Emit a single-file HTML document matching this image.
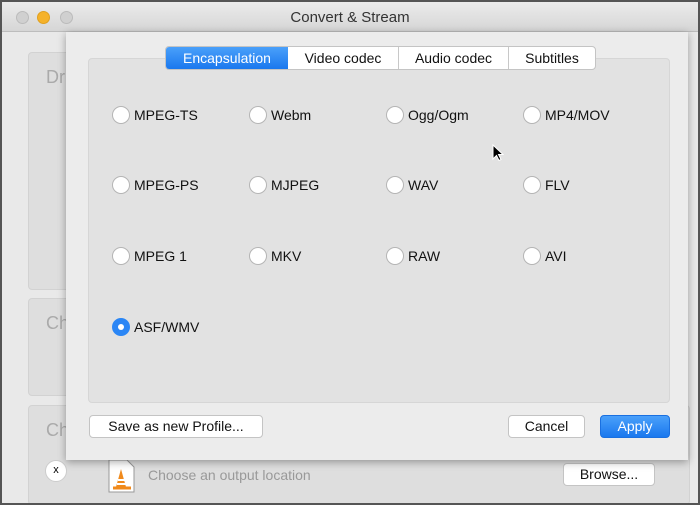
<!DOCTYPE html>
<html><head><style>
*{margin:0;padding:0;box-sizing:border-box}
body{width:700px;height:505px;overflow:hidden;font-family:"Liberation Sans",sans-serif;font-size:14px;background:#555;position:relative}
.win{position:absolute;left:2px;top:2px;width:696px;height:501px;background:#e9e9e9;overflow:hidden}
.title{position:absolute;left:0;top:0;width:100%;height:30px;background:linear-gradient(#ebebeb,#d6d6d6);border-bottom:1px solid #bdbdbd;text-align:center;line-height:32px;color:#333;font-size:15px}
.dot{position:absolute;top:9px;width:13px;height:13px;border-radius:50%;background:#d0d0d0;border:1px solid #bbb}
.pan{position:absolute;left:26px;width:60px;background:#dedede;border:1px solid #d2d2d2;border-radius:4px;color:#aaa;font-size:18px;padding:14px 0 0 17px}
.sheet{position:absolute;left:64px;top:30px;width:622px;height:428px;background:#ececec;box-shadow:0 2px 8px rgba(0,0,0,.35)}
.grp{position:absolute;left:22px;top:26px;width:582px;height:345px;background:#e2e2e2;border:1px solid #d6d6d6;border-radius:4px}
.tabs{position:absolute;left:99px;top:14px;height:24px;display:flex;border:1px solid #c4c4c4;border-radius:4px;background:#fff;overflow:hidden;font-size:14px}
.tabs div{line-height:22px;border-left:1px solid #c8c8c8;color:#111;text-align:center}
.tabs .on{background:linear-gradient(#4aa0fa,#1a78ee);color:#fff;border:none;width:122px;text-align:center}
.r{position:absolute;display:flex;align-items:center;color:#111;font-size:14px}
.r i{display:inline-block;width:18px;height:18px;border-radius:50%;background:#fff;border:1px solid #b5b5b5;margin-right:4px}
.r i.sel{background:#2b86f5;border-color:#2b86f5;position:relative}
.r i.sel:after{content:"";position:absolute;left:5px;top:5px;width:6px;height:6px;border-radius:50%;background:#fff}
.btn{position:absolute;height:23px;background:#fff;border:1px solid #c4c4c4;border-radius:4px;text-align:center;line-height:21px;color:#111;font-size:14px}
</style></head><body>
<div class="win">
<div class="title">Convert &amp; Stream</div>
<div class="dot" style="left:14px"></div>
<div class="dot" style="left:35px;background:#f5b22a;border-color:#e0a020"></div>
<div class="dot" style="left:58px"></div>
<div class="pan" style="top:50px;height:238px">Dr</div>
<div class="pan" style="top:296px;height:98px">Ch</div>
<div class="pan" style="top:403px;height:100px;width:662px">Ch</div>
<div style="position:absolute;left:43px;top:458px;width:22px;height:22px;border-radius:50%;background:#fff;border:1px solid #ccc;text-align:center;line-height:19px;font-size:11px">x</div>
<svg style="position:absolute;left:106px;top:457px" width="28" height="34" viewBox="0 0 28 34"><path d="M1 1h18l7 7v25H1z" fill="#fff" stroke="#999"/><path d="M8 28l5-18 5 18z" fill="#f08a1c"/><path d="M10 21h7M9 25h9" stroke="#fff" stroke-width="2"/><path d="M5 29h18" stroke="#f08a1c" stroke-width="3"/></svg>
<div style="position:absolute;left:146px;top:465px;color:#999;font-size:14px">Choose an output location</div>
<div class="btn" style="left:561px;top:461px;width:92px">Browse...</div>
<div class="sheet">
<div class="grp"></div>
<div class="tabs"><div class="on">Encapsulation</div><div style="border-left:none;width:110px">Video codec</div><div style="width:110px">Audio codec</div><div style="width:87px">Subtitles</div></div>
<div class="r" style="left:46px;top:74px"><i></i>MPEG-TS</div>
<div class="r" style="left:183px;top:74px"><i></i>Webm</div>
<div class="r" style="left:320px;top:74px"><i></i>Ogg/Ogm</div>
<div class="r" style="left:457px;top:74px"><i></i>MP4/MOV</div>
<div class="r" style="left:46px;top:144px"><i></i>MPEG-PS</div>
<div class="r" style="left:183px;top:144px"><i></i>MJPEG</div>
<div class="r" style="left:320px;top:144px"><i></i>WAV</div>
<div class="r" style="left:457px;top:144px"><i></i>FLV</div>
<div class="r" style="left:46px;top:215px"><i></i>MPEG 1</div>
<div class="r" style="left:183px;top:215px"><i></i>MKV</div>
<div class="r" style="left:320px;top:215px"><i></i>RAW</div>
<div class="r" style="left:457px;top:215px"><i></i>AVI</div>
<div class="r" style="left:46px;top:286px"><i class="sel"></i>ASF/WMV</div>
<svg style="position:absolute;left:426px;top:112px" width="12" height="18" viewBox="0 0 12 18"><path d="M1 1v14l3.5-3.5 2.5 5 2-1-2.5-5H11z" fill="#000" stroke="#fff" stroke-width="1"/></svg>
<div class="btn" style="left:23px;top:383px;width:174px">Save as new Profile...</div>
<div class="btn" style="left:442px;top:383px;width:77px">Cancel</div>
<div class="btn" style="left:534px;top:383px;width:70px;background:linear-gradient(#4aa0fa,#1a78ee);border-color:#1a70e0;color:#fff">Apply</div>
</div>
</div>
</body></html>
